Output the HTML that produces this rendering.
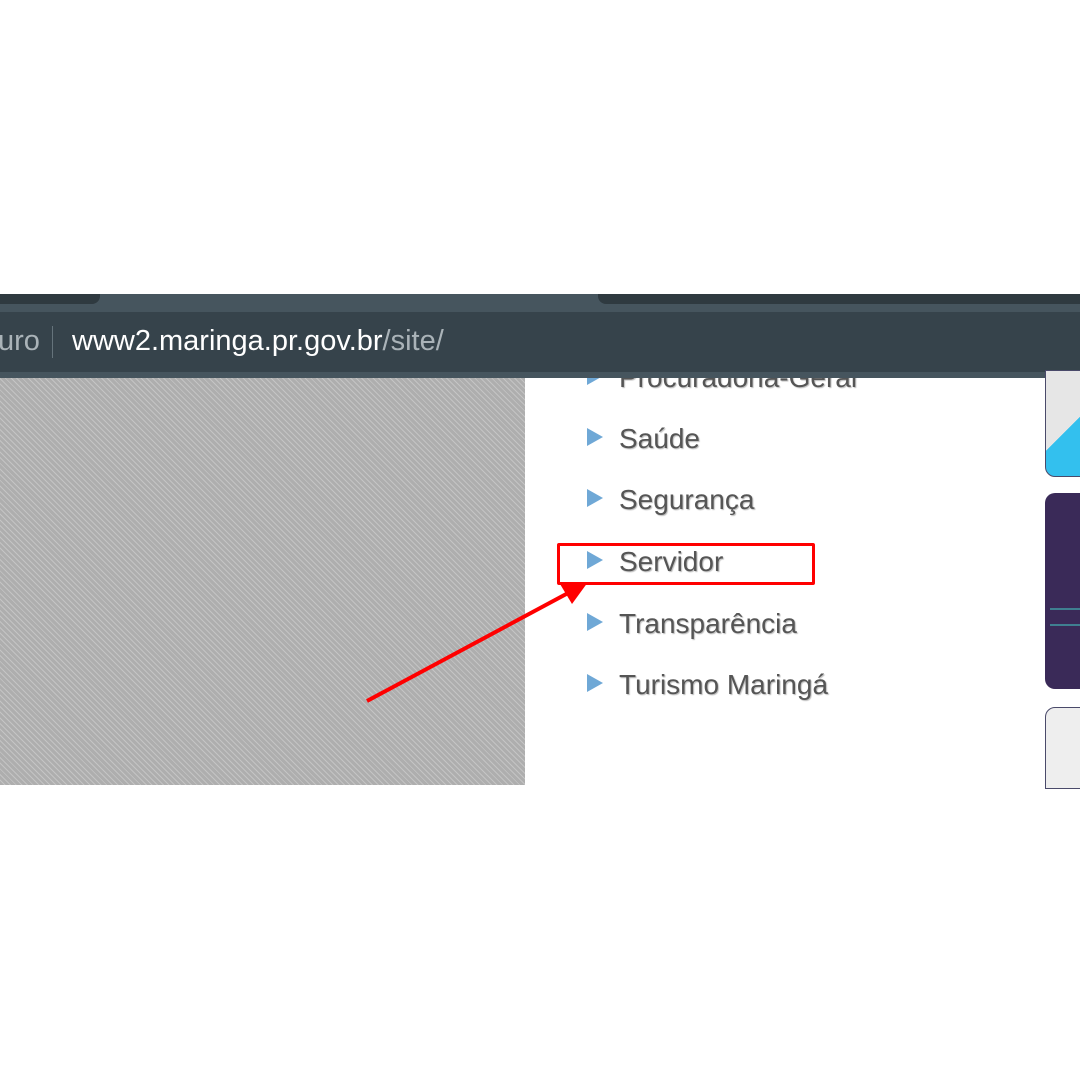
<!DOCTYPE html>
<html><head><meta charset="utf-8"><style>
body{margin:0;width:1080px;height:1080px;background:#fff;position:relative;overflow:hidden;font-family:"Liberation Sans",sans-serif}
.abs{position:absolute}
.tabs{left:0;top:294px;width:1080px;height:18px;background:#46555e}
.tab1{left:0;top:294px;width:100px;height:10px;background:#2f3a40;border-radius:0 0 8px 0}
.tab2{left:598px;top:294px;width:482px;height:10px;background:#2f3a40;border-radius:0 0 0 8px}
.bar{left:0;top:312px;width:1080px;height:60px;background:#36434b}
.bar2{left:0;top:372px;width:1080px;height:6px;background:#46555e}
.hatch{left:0;top:378px;width:525px;height:407px;background:repeating-linear-gradient(45deg,#aeaeae 0 3px,#c4c4c4 3px 4px)}
.item{left:587px;font-size:28px;color:#555;text-shadow:1px 1px 1px #bbb}
.item:before{content:"";display:inline-block;width:0;height:0;border-left:16px solid #6fa8d6;border-top:9px solid transparent;border-bottom:9px solid transparent;margin-right:16px;vertical-align:2px}
</style></head><body>
<div class="abs tabs"></div><div class="abs tab1"></div><div class="abs tab2"></div>
<div class="abs bar"></div><div class="abs bar2"></div>
<div class="abs" style="left:-2px;top:325px;font-size:29px;color:#aab3b8">uro</div>
<div class="abs" style="left:52px;top:326px;width:1px;height:32px;background:#65737b"></div>
<div class="abs" style="left:72px;top:325px;font-size:29px;color:#fff">www2.maringa.pr.gov.br<span style="color:#aab3b8">/site/</span></div>
<div class="abs hatch"></div>
<div class="abs" style="left:525px;top:378px;width:555px;height:407px;overflow:hidden">
<div class="abs item" style="top:-16px;left:62px">Procuradoria-Geral</div>
</div>
<div class="abs item" style="top:423px">Saúde</div>
<div class="abs item" style="top:484px">Segurança</div>
<div class="abs item" style="top:546px">Servidor</div>
<div class="abs item" style="top:608px">Transparência</div>
<div class="abs item" style="top:669px">Turismo Maringá</div>
<div class="abs" style="left:1045px;top:370px;width:40px;height:105px;border:1px solid #4a4a6a;border-radius:0 0 0 10px;background:linear-gradient(135deg,#e6e6e6 0 55%,#33c0ee 55%)"></div>
<div class="abs" style="left:1045px;top:493px;width:40px;height:196px;border-radius:10px 0 0 10px;background:#3a2a58"></div>
<div class="abs" style="left:1050px;top:608px;width:35px;height:2px;background:#3f7f90"></div>
<div class="abs" style="left:1050px;top:624px;width:35px;height:2px;background:#3f7f90"></div>
<div class="abs" style="left:1045px;top:707px;width:40px;height:80px;border:1px solid #4a4a6a;border-radius:10px 0 0 0;background:#eee"></div>
<div class="abs" style="left:557px;top:543px;width:252px;height:36px;border:3px solid #f00;border-radius:2px"></div>
<svg class="abs" style="left:0;top:0" width="1080" height="1080"><line x1="367" y1="701" x2="570" y2="592" stroke="#f00" stroke-width="4"/><polygon points="588,582 560,584 572,604" fill="#f00"/></svg>
</body></html>
